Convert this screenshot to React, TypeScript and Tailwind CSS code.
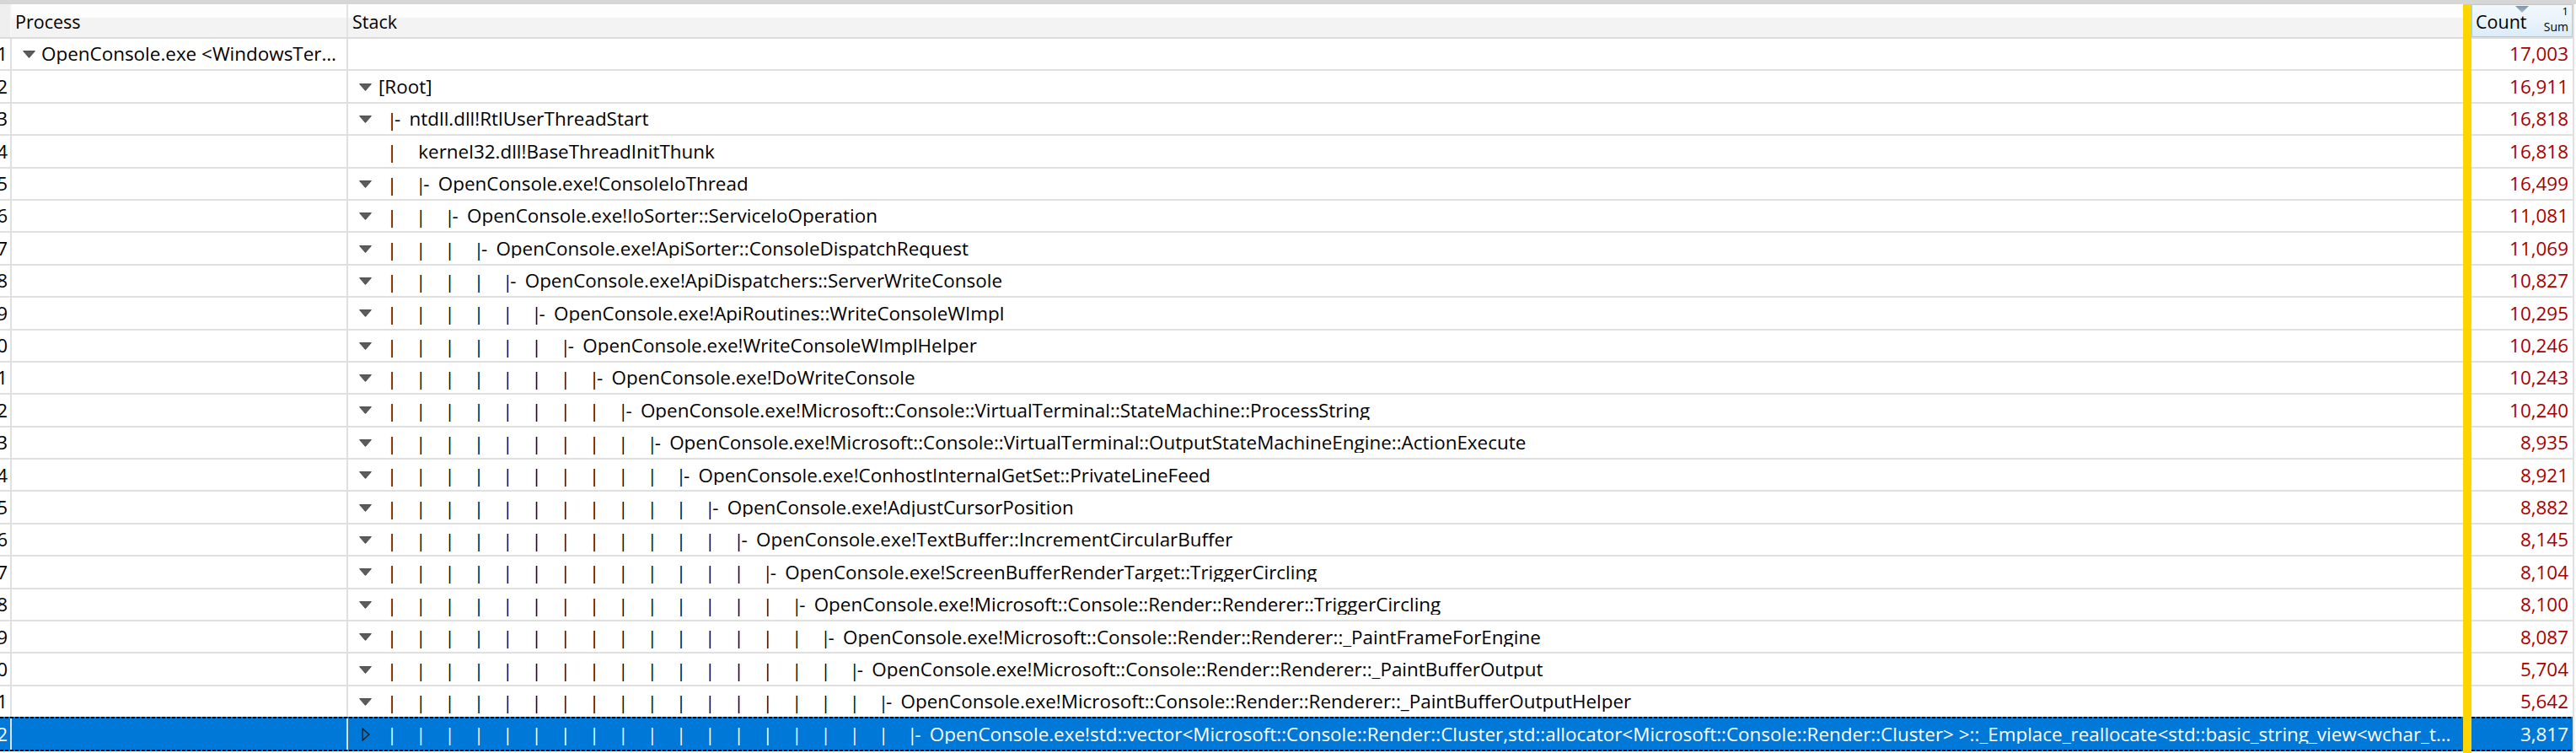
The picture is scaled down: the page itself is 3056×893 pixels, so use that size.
import React from "react";

type Kind = "process" | "root" | "node" | "leaf";
interface Row {
  n: number;
  kind: Kind;
  ticks: number;
  name: string;
  count: string;
  arrow: "down" | "right" | "none";
  selected?: boolean;
}

const stackNames: string[] = [
  "OpenConsole.exe!ConsoleIoThread",
  "OpenConsole.exe!IoSorter::ServiceIoOperation",
  "OpenConsole.exe!ApiSorter::ConsoleDispatchRequest",
  "OpenConsole.exe!ApiDispatchers::ServerWriteConsole",
  "OpenConsole.exe!ApiRoutines::WriteConsoleWImpl",
  "OpenConsole.exe!WriteConsoleWImplHelper",
  "OpenConsole.exe!DoWriteConsole",
  "OpenConsole.exe!Microsoft::Console::VirtualTerminal::StateMachine::ProcessString",
  "OpenConsole.exe!Microsoft::Console::VirtualTerminal::OutputStateMachineEngine::ActionExecute",
  "OpenConsole.exe!ConhostInternalGetSet::PrivateLineFeed",
  "OpenConsole.exe!AdjustCursorPosition",
  "OpenConsole.exe!TextBuffer::IncrementCircularBuffer",
  "OpenConsole.exe!ScreenBufferRenderTarget::TriggerCircling",
  "OpenConsole.exe!Microsoft::Console::Render::Renderer::TriggerCircling",
  "OpenConsole.exe!Microsoft::Console::Render::Renderer::_PaintFrameForEngine",
  "OpenConsole.exe!Microsoft::Console::Render::Renderer::_PaintBufferOutput",
  "OpenConsole.exe!Microsoft::Console::Render::Renderer::_PaintBufferOutputHelper",
  "OpenConsole.exe!std::vector<Microsoft::Console::Render::Cluster,std::allocator<Microsoft::Console::Render::Cluster> >::_Emplace_reallocate<std::basic_string_view<wchar_t,std::char_traits<wchar_t> > const &,unsigned __int64 &>",
];

const stackCounts: string[] = [
  "16,499",
  "11,081",
  "11,069",
  "10,827",
  "10,295",
  "10,246",
  "10,243",
  "10,240",
  "8,935",
  "8,921",
  "8,882",
  "8,145",
  "8,104",
  "8,100",
  "8,087",
  "5,704",
  "5,642",
  "3,817",
];

const rows: Row[] = [
  { n: 1, kind: "process", ticks: 0, name: "OpenConsole.exe <WindowsTerminal> (21436)", count: "17,003", arrow: "down" },
  { n: 2, kind: "root", ticks: 0, name: "[Root]", count: "16,911", arrow: "down" },
  { n: 3, kind: "node", ticks: 0, name: "ntdll.dll!RtlUserThreadStart", count: "16,818", arrow: "down" },
  { n: 4, kind: "leaf", ticks: 1, name: "kernel32.dll!BaseThreadInitThunk", count: "16,818", arrow: "none" },
  ...stackNames.map((name, i) => ({
    n: 5 + i,
    kind: "node" as Kind,
    ticks: 1 + i,
    name,
    count: stackCounts[i],
    arrow: (i === stackNames.length - 1 ? "right" : "down") as "down" | "right",
    selected: i === stackNames.length - 1,
  })),
];

const DownArrow = () => (
  <svg width="15" height="9" viewBox="0 0 15 9" className="block">
    <polygon points="0.6,0.6 14.4,0.6 7.5,8.4" fill="#5c5c5c" stroke="#4a4a4a" strokeWidth="1" strokeLinejoin="round" />
  </svg>
);

const RightArrow = () => (
  <svg width="10" height="16" viewBox="0 0 10 16" className="block">
    <polygon points="1,1 9,8 1,15" fill="none" stroke="#1c1c1c" strokeWidth="1.5" strokeLinejoin="miter" />
  </svg>
);

const Arrow = ({ kind }: { kind: Row["arrow"] }) => (
  <span className="flex w-[15px] shrink-0 items-center justify-center">
    {kind === "down" ? <DownArrow /> : kind === "right" ? <RightArrow /> : null}
  </span>
);

const Bar = () => (
  <span className="inline-flex w-[6px] shrink-0 translate-y-[1px] justify-center text-[21px] leading-none">|</span>
);

const Tick = () => (
  <span className="flex w-[34.3px] shrink-0">
    <Bar />
  </span>
);

function RowLine({ dashed }: { dashed: boolean }) {
  return dashed ? (
    <div className="h-[2px] shrink-0 bg-[repeating-linear-gradient(to_right,#000000_0px,#000000_4px,#0078d7_4px,#0078d7_6px)]" />
  ) : (
    <div className="h-[2px] shrink-0 bg-[#e0e0e0]" />
  );
}

function StackCell({ row }: { row: Row }) {
  if (row.kind === "process") return <div className="min-w-0 flex-1" />;
  return (
    <div className="flex min-w-0 flex-1 items-center pl-[13px] pr-[9px] pt-[1px]">
      <Arrow kind={row.arrow} />
      {row.kind === "root" ? (
        <span className="ml-[8px] min-w-0 flex-1 truncate">{row.name}</span>
      ) : (
        <>
          <span className="w-[21px] shrink-0" />
          {Array.from({ length: row.ticks }).map((_, i) => (
            <Tick key={i} />
          ))}
          {row.kind === "node" && (
            <>
              <Bar />
              <span className="w-[17.5px] shrink-0">-</span>
            </>
          )}
          <span className="min-w-0 flex-1 truncate">{row.name}</span>
        </>
      )}
    </div>
  );
}

export default function App() {
  return (
    <div className="flex h-[893px] w-[3056px] flex-col overflow-hidden bg-white font-['Open_Sans','Noto_Sans',sans-serif] text-black">
      <div className="h-[5px] shrink-0 bg-[#d6d6d6]" />
      <div className="flex min-h-0 flex-1">
        {/* main table */}
        <div className="flex min-w-0 flex-1 flex-col">
          <div className="flex h-[41px] shrink-0 border-b-2 border-[#dcdcdc] text-[21.5px]">
            <div className="w-[14px] shrink-0 border-r-2 border-[#f7f7f7] bg-[#efefef]" />
            <div className="flex w-[399px] shrink-0 items-center border-r-2 border-[#e3e3e3] bg-[linear-gradient(to_bottom,#fdfdfd_0%,#fdfdfd_40%,#f3f3f3_40%,#f3f3f3_100%)] pl-[4px] pt-[3px]">
              Process
            </div>
            <div className="flex min-w-0 flex-1 items-center bg-[linear-gradient(to_bottom,#fdfdfd_0%,#fdfdfd_40%,#f3f3f3_40%,#f3f3f3_100%)] pl-[5px] pt-[3px]">
              Stack
            </div>
          </div>
          {rows.map((row, i) => {
            const next = rows[i + 1];
            const dashed = !!row.selected || !!(next && next.selected);
            return (
              <div
                key={row.n}
                className={`flex h-[38.4px] shrink-0 flex-col text-[22.45px] leading-none ${
                  row.selected ? "bg-[#0078d7] text-white" : "bg-white text-black"
                }`}
              >
                <div className="flex min-h-0 flex-1">
                  <div className="flex w-[14px] shrink-0 items-center justify-end overflow-hidden border-r-2 border-[#e0e0e0] pr-[3px] pt-[1px]">
                    <span className="shrink-0 whitespace-nowrap">{row.n}</span>
                  </div>
                  <div className="flex w-[399px] shrink-0 items-center border-r-2 border-[#e0e0e0] pl-[13px] pr-[8px] pt-[1px]">
                    {row.kind === "process" && (
                      <>
                        <Arrow kind="down" />
                        <span className="ml-[7px] min-w-0 flex-1 truncate">{row.name}</span>
                      </>
                    )}
                  </div>
                  <StackCell row={row} />
                </div>
                <RowLine dashed={dashed} />
              </div>
            );
          })}
        </div>

        {/* highlight bar */}
        <div className="w-[10px] shrink-0 bg-[#ffd500]" />

        {/* count column */}
        <div className="flex w-[122px] shrink-0 flex-col border-r-2 border-[#e0e0e0]">
          <div className="flex h-[41px] shrink-0 flex-col border-b-2 border-[#dcdcdc]">
            <div className="relative flex min-h-0 flex-1 border-[1.5px] border-[#a1cfee] bg-[linear-gradient(to_bottom,#f3f9fd_0%,#eaf4fb_45%,#dcecf8_100%)]">
              <svg width="16" height="8" viewBox="0 0 16 8" className="absolute left-1/2 top-[0.5px] -translate-x-1/2">
                <defs>
                  <linearGradient id="sortg" x1="0" y1="0" x2="0" y2="1">
                    <stop offset="0" stopColor="#7b93aa" />
                    <stop offset="1" stopColor="#a9bccd" />
                  </linearGradient>
                </defs>
                <polygon points="0,0 16,0 8,8" fill="url(#sortg)" />
              </svg>
              <div className="flex flex-1 items-center pl-[4px] pt-[3px] text-[21.5px] leading-none">Count</div>
              <div className="flex flex-col items-end pr-[4px] pt-[1px] leading-none">
                <span className="text-[13px] leading-none">1</span>
                <span className="mt-[5px] text-[14px] leading-none">Sum</span>
              </div>
            </div>
          </div>
          {rows.map((row, i) => {
            const next = rows[i + 1];
            const dashed = !!row.selected || !!(next && next.selected);
            return (
              <div
                key={row.n}
                className={`flex h-[38.4px] shrink-0 flex-col text-[22.45px] leading-none ${
                  row.selected ? "bg-[#0078d7] text-white" : "bg-white text-[#a80000]"
                }`}
              >
                <div className="flex min-h-0 flex-1 items-center justify-end pr-[5px] pt-[1px]">{row.count}</div>
                <RowLine dashed={dashed} />
              </div>
            );
          })}
        </div>
        <div className="w-[2px] shrink-0 bg-white" />
      </div>
    </div>
  );
}
